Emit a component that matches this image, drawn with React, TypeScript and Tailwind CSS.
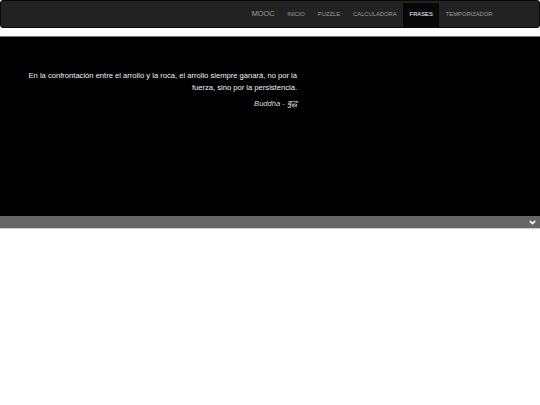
import { ChevronDown } from "lucide-react"

const links = ["INICIO", "PUZZLE", "CALCULADORA", "FRASES", "TEMPORIZADOR"]

export default function App() {
  return (
    <div className="w-[540px] h-[405px] bg-white antialiased font-['Liberation_Sans',Arial,sans-serif]">
      {/* navbar */}
      <nav className="h-[28px] bg-[#222] border border-[#080808] rounded-[3px] flex items-stretch justify-end pr-[40px]">
        <div className="flex items-center pr-[6px] pb-[1px] text-[7.4px] text-[#9d9d9d]">MOOC</div>
        <ul className="flex items-stretch pt-[2px]">
          {links.map((l) => (
            <li
              key={l}
              className={`flex items-center px-[6.5px] pb-[1px] text-[5.8px] ${
                l === "FRASES" ? "bg-[#080808] text-white" : "text-[#9d9d9d]"
              }`}
            >
              {l}
            </li>
          ))}
        </ul>
      </nav>

      {/* quote */}
      <section className="mt-[8px] border-t border-[#777] bg-black h-[180px] pt-[33px] pl-[28px]">
        <div className="w-[269px] text-right">
          <p className="text-[7.6px] leading-[12px] text-[#f2f2f2]">
            En la confrontación entre el arrollo y la roca, el arrollo siempre ganará, no por la
            fuerza, sino por la persistencia.
          </p>
          <p className="mt-[4px] text-[7.6px] leading-[12px] italic text-[#ddd]">Buddha - बुद्ध</p>
        </div>
      </section>

      {/* toggle bar */}
      <div className="h-[13px] bg-[#666] border-b border-[#ccc] flex items-center justify-end pr-[3px]">
        <ChevronDown className="w-[9px] h-[9px] text-white" strokeWidth={4} />
      </div>
    </div>
  )
}
